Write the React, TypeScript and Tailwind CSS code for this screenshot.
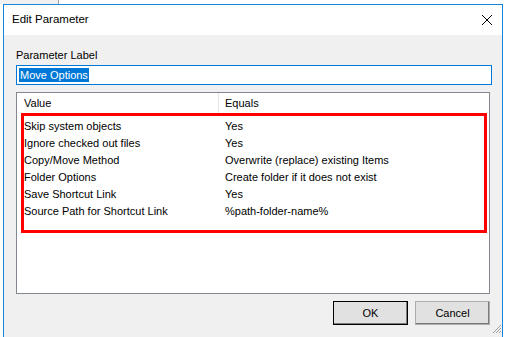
import React from 'react';

const rows: [string, string][] = [
  ['Skip system objects', 'Yes'],
  ['Ignore checked out files', 'Yes'],
  ['Copy/Move Method', 'Overwrite (replace) existing Items'],
  ['Folder Options', 'Create folder if it does not exist'],
  ['Save Shortcut Link', 'Yes'],
  ['Source Path for Shortcut Link', '%path-folder-name%'],
];

const font = { fontFamily: '"Segoe UI", "Liberation Sans", Arial, sans-serif' };

const App = () => {
  return (
    <div className="w-[505px] h-[337px] overflow-hidden bg-white text-[11px] text-black" style={font}>
      {/* Background behind the dialog */}
      <div className="h-[4px] flex">
        <div className="w-[58px] bg-[#f0f0f0]" />
        <div className="w-px bg-[#a0a0a0]" />
      </div>

      {/* Dialog window */}
      <div className="ml-[3px] w-[500px] h-[340px] border border-b-0 border-[#1883d7] flex flex-col">
        {/* Title bar */}
        <div className="h-[30px] bg-white flex items-center justify-between pl-[8px] pr-[8px]">
          <span className="text-[11.5px]">Edit Parameter</span>
          <svg width="12" height="12" viewBox="0 0 12 12" className="mr-[1px]">
            <path d="M1 1L11 11M11 1L1 11" stroke="#000" strokeWidth="1" />
          </svg>
        </div>

        {/* Body */}
        <div className="flex-1 bg-[#f0f0f0] pl-[12px] pr-[10px] pt-[13px] flex flex-col relative">
          <div className="h-[15px] leading-[15px]">Parameter Label</div>
          <div className="mt-[2px] h-[20px] border border-[#0078d7] bg-white flex items-center pl-[2px]">
            <span className="bg-[#0078d7] text-white leading-[14px] px-[1px]">Move Options</span>
          </div>

          {/* List view */}
          <div className="mt-[7px] mr-[2px] h-[202px] border border-[#828790] bg-white pl-[4px] pr-[2px]">
            <div className="h-[20px] flex items-center">
              <div className="w-[197px] pl-[3px]">Value</div>
              <div className="w-px h-[20px] bg-[#e5e5e5]" />
              <div className="pl-[6px]">Equals</div>
            </div>
            <div className="border-[3px] border-[#ff0000] h-[120px] pt-[2px]">
              {rows.map(([k, v]) => (
                <div key={k} className="h-[17px] flex items-center">
                  <div className="w-[201px]">{k}</div>
                  <div>{v}</div>
                </div>
              ))}
            </div>
          </div>

          {/* Buttons */}
          <div className="mt-[7px] mr-[2px] flex justify-end gap-[7px]">
            <button className="w-[75px] h-[24px] bg-[#e1e1e1] border border-[#000] shadow-[inset_-1px_-1px_0_#7a7a7a] text-[11px]" style={font}>
              OK
            </button>
            <button className="w-[75px] h-[24px] bg-[#e1e1e1] border border-[#adadad] shadow-[inset_-1px_-1px_0_#7a7a7a] text-[11px]" style={font}>
              Cancel
            </button>
          </div>

          {/* Resize grip */}
          <svg width="12" height="12" viewBox="0 0 12 12" className="absolute right-0 top-[287px]">
            <path d="M11 3L3 11M11 6L6 11M11 9L9 11" stroke="#a0a0a0" strokeWidth="1" />
          </svg>
        </div>
      </div>
    </div>
  );
};

export default App;
